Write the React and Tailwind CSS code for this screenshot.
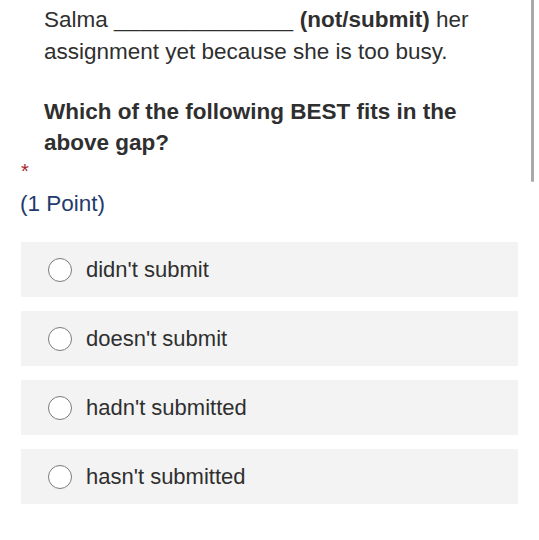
import React from "react";

const options = ["didn't submit", "doesn't submit", "hadn't submitted", "hasn't submitted"];

const Radio = () => (
  <span className="inline-block h-[24px] w-[24px] shrink-0 rounded-full border-[1.5px] border-[#7a7a7a] bg-white" />
);

const App = () => {
  return (
    <div
      className="relative h-[540px] w-[539px] overflow-hidden bg-white text-[#2f2f2f]"
      style={{ fontFamily: '"Liberation Sans", Arial, sans-serif' }}
    >
      {/* scrollbar */}
      <div className="absolute right-[5px] top-0 h-[182px] w-[3px] rounded-b bg-[#a9a9a9]" />

      <div className="pt-[4px]">
        <p className="pl-[44px] pr-[40px] text-[22.5px] leading-[32px]">
          Salma <span className="tracking-[0.3px]">______________</span> <b>(not/submit)</b> her assignment yet
          because she is too busy.
        </p>
        <p className="mt-[28px] pl-[44px] pr-[50px] text-[22.5px] font-bold leading-[31px]">
          Which of the following BEST fits in the above gap?
        </p>
        <div className="mt-[2px] pl-[21px] text-[20px] leading-[22px] text-[#a4262c]">*</div>
        <div className="mt-[9px] pl-[20px] text-[22.5px] leading-[26px] text-[#1f3b6e]">(1 Point)</div>

        <div className="mt-[25px] flex flex-col gap-[14px] pl-[21px] pr-[21px]">
          {options.map((opt) => (
            <label key={opt} className="flex h-[55px] items-center gap-[14px] bg-[#f3f3f3] pl-[27px]">
              <Radio />
              <span className="text-[22px]">{opt}</span>
            </label>
          ))}
        </div>
      </div>
    </div>
  );
};

export default App;
